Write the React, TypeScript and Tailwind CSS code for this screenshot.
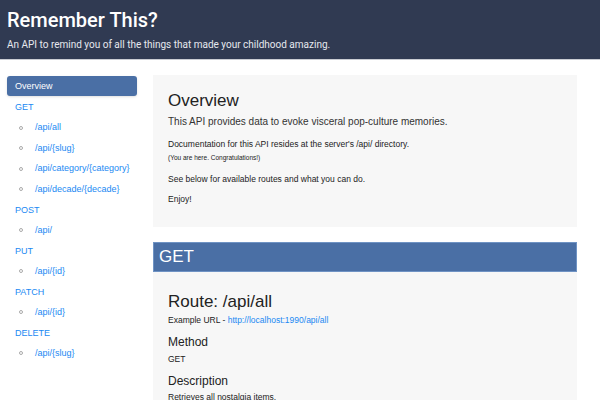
import React from "react";

type Route = {
    path: string;
};

type Group = {
    method: string;
    routes: Route[];
};

const groups: Group[] = [
    { method: "GET", routes: [{ path: "/api/all" }, { path: "/api/{slug}" }, { path: "/api/category/{category}" }, { path: "/api/decade/{decade}" }] },
    { method: "POST", routes: [{ path: "/api/" }] },
    { method: "PUT", routes: [{ path: "/api/{id}" }] },
    { method: "PATCH", routes: [{ path: "/api/{id}" }] },
    { method: "DELETE", routes: [{ path: "/api/{slug}" }] },
];

function Sidebar() {
    return (
        <nav className="w-[153px] shrink-0 pl-[7px] pr-[16px] pt-[16px]">
            <div className="h-[20px] rounded-[3px] bg-[#4a6fa5] px-[8px] text-[9px] leading-[20px] text-white shadow-sm">
                Overview
            </div>
            <ul className="mt-[1px]">
                {groups.map((g) => (
                    <li key={g.method}>
                        <div className="h-[20.5px] pl-[8px] text-[9px] leading-[20.5px] text-[#2189f3]">{g.method}</div>
                        <ul>
                            {g.routes.map((r, i) => (
                                <li key={i} className="flex h-[20.5px] items-center pl-[12px] text-[9px] text-[#2189f3]">
                                    <span className="mr-[12px] inline-block h-[4px] w-[4px] rounded-full border border-[#aaaaaa]" />
                                    {r.path}
                                </li>
                            ))}
                        </ul>
                    </li>
                ))}
            </ul>
        </nav>
    );
}

export default function App() {
    return (
        <div className="h-[400px] overflow-hidden bg-white" style={{ fontFamily: '"Liberation Sans", Arial, sans-serif' }}>
            <header className="h-[60px] border-b border-[#c9ccd3] bg-[#303a52] px-[7px] pt-[6px] text-white" style={{ fontFamily: 'Roboto, "Liberation Sans", sans-serif' }}>
                <h1 className="text-[20px] leading-[28px] font-medium">Remember This?</h1>
                <p className="mt-[4px] text-[10px] leading-[14px] text-[#e6e8ee]">
                    An API to remind you of all the things that made your childhood amazing.
                </p>
            </header>

            <div className="flex">
                <Sidebar />
                <main className="w-[424px] pt-[15px]">
                    <section className="h-[152px] bg-[#f7f7f7] px-[15px] pt-[16px] text-[#222]">
                        <h2 className="text-[17px] leading-[20px]">Overview</h2>
                        <p className="mt-[3px] text-[10px] leading-[16px] text-[#333]">This API provides data to evoke visceral pop-culture memories.</p>
                        <p className="mt-[8px] text-[8.5px] leading-[12px]">Documentation for this API resides at the server's /api/ directory.</p>
                        <p className="mt-[2px] text-[6.5px] leading-[12px]">(You are here. Congratulations!)</p>
                        <p className="mt-[9px] text-[8.5px] leading-[12px]">See below for available routes and what you can do.</p>
                        <p className="mt-[8px] text-[8.5px] leading-[12px]">Enjoy!</p>
                    </section>

                    <section className="mt-[15px]">
                        <div className="h-[30px] border border-[#6f93c4] bg-[#4a6fa5] px-[5px] text-[17px] leading-[28px] text-white">GET</div>
                        <div className="h-[200px] bg-[#f7f7f7] px-[15px] pt-[19px] text-[#222]">
                            <h3 className="text-[17px] leading-[22px]">Route: /api/all</h3>
                            <p className="mt-[1px] text-[8.5px] leading-[12px]">
                                Example URL - <a className="text-[#2189f3]">http://localhost:1990/api/all</a>
                            </p>
                            <h4 className="mt-[8px] text-[12px] leading-[16px]">Method</h4>
                            <p className="mt-[3px] text-[8.5px] leading-[12px]">GET</p>
                            <h4 className="mt-[8px] text-[12px] leading-[16px]">Description</h4>
                            <p className="mt-[2px] text-[8.5px] leading-[12px]">Retrieves all nostalgia items.</p>
                        </div>
                    </section>
                </main>
            </div>
        </div>
    );
}
